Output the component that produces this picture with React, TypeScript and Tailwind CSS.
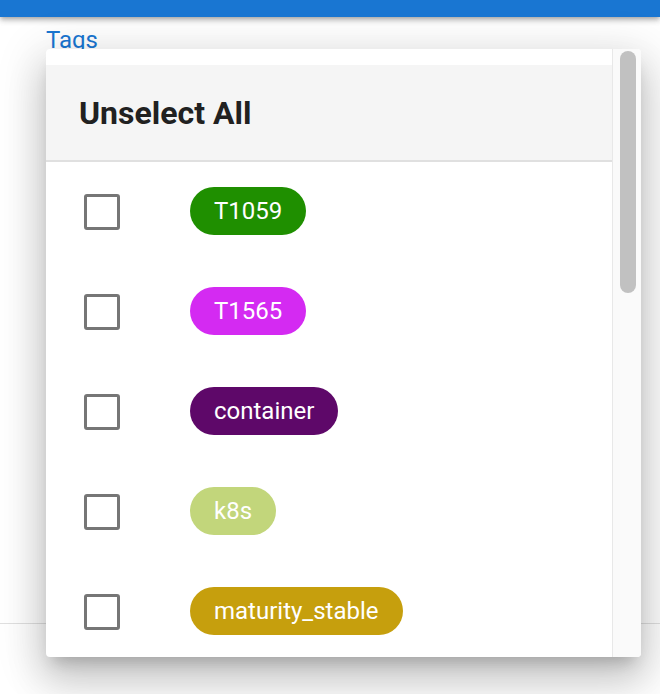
import React from "react";

const tags = [
  { label: "T1059", color: "bg-[#1f8f00]" },
  { label: "T1565", color: "bg-[#d42af2]" },
  { label: "container", color: "bg-[#5e0869]" },
  { label: "k8s", color: "bg-[#c2d67b]" },
  { label: "maturity_stable", color: "bg-[#c69f0d]" },
];

export default function App() {
  return (
    <div className="relative w-[660px] h-[694px] bg-white overflow-hidden font-['Roboto',sans-serif]">
      <div className="relative z-10 h-[17px] bg-[#1976d2] shadow-[0px_2px_4px_-1px_rgba(0,0,0,0.2),0px_4px_5px_0px_rgba(0,0,0,0.14),0px_1px_10px_0px_rgba(0,0,0,0.12)]" />
      <div className="h-[607px] border-b border-[#e0e0e0] pl-[46px] pt-[11px]">
        <div className="text-[24px] leading-[24px] text-[#1976d2]">Tags</div>
      </div>

      <div className="absolute z-20 left-[46px] top-[49px] w-[595px] h-[608px] flex bg-white rounded-[4px] overflow-hidden shadow-[0px_11px_15px_-7px_rgba(0,0,0,0.2),0px_24px_38px_3px_rgba(0,0,0,0.14),0px_9px_46px_8px_rgba(0,0,0,0.12)]">
        <div className="flex-1 flex flex-col pt-[16px] overflow-hidden">
          <div className="shrink-0 h-[97px] bg-[#f5f5f5] border-b-2 border-[#e0e0e0] flex items-center pl-[33px]">
            <span className="text-[32px] font-bold text-[#212121] leading-none">Unselect All</span>
          </div>
          {tags.map((t) => (
            <div key={t.label} className="shrink-0 h-[100px] flex items-center">
              <div className="ml-[38px] w-[36px] h-[36px] border-[3px] border-[#767676] rounded-[3px] bg-white" />
              <div className={`ml-[70px] -mt-[2px] h-[48px] px-[24px] rounded-full flex items-center text-white text-[24px] leading-none ${t.color}`}>
                {t.label}
              </div>
            </div>
          ))}
        </div>
        <div className="w-[29px] shrink-0 border-l border-[#e8e8e8] bg-[#fafafa] pl-[7px] pt-[2px]">
          <div className="w-[16px] h-[242px] rounded-full bg-[#c1c1c1]" />
        </div>
      </div>
    </div>
  );
}
